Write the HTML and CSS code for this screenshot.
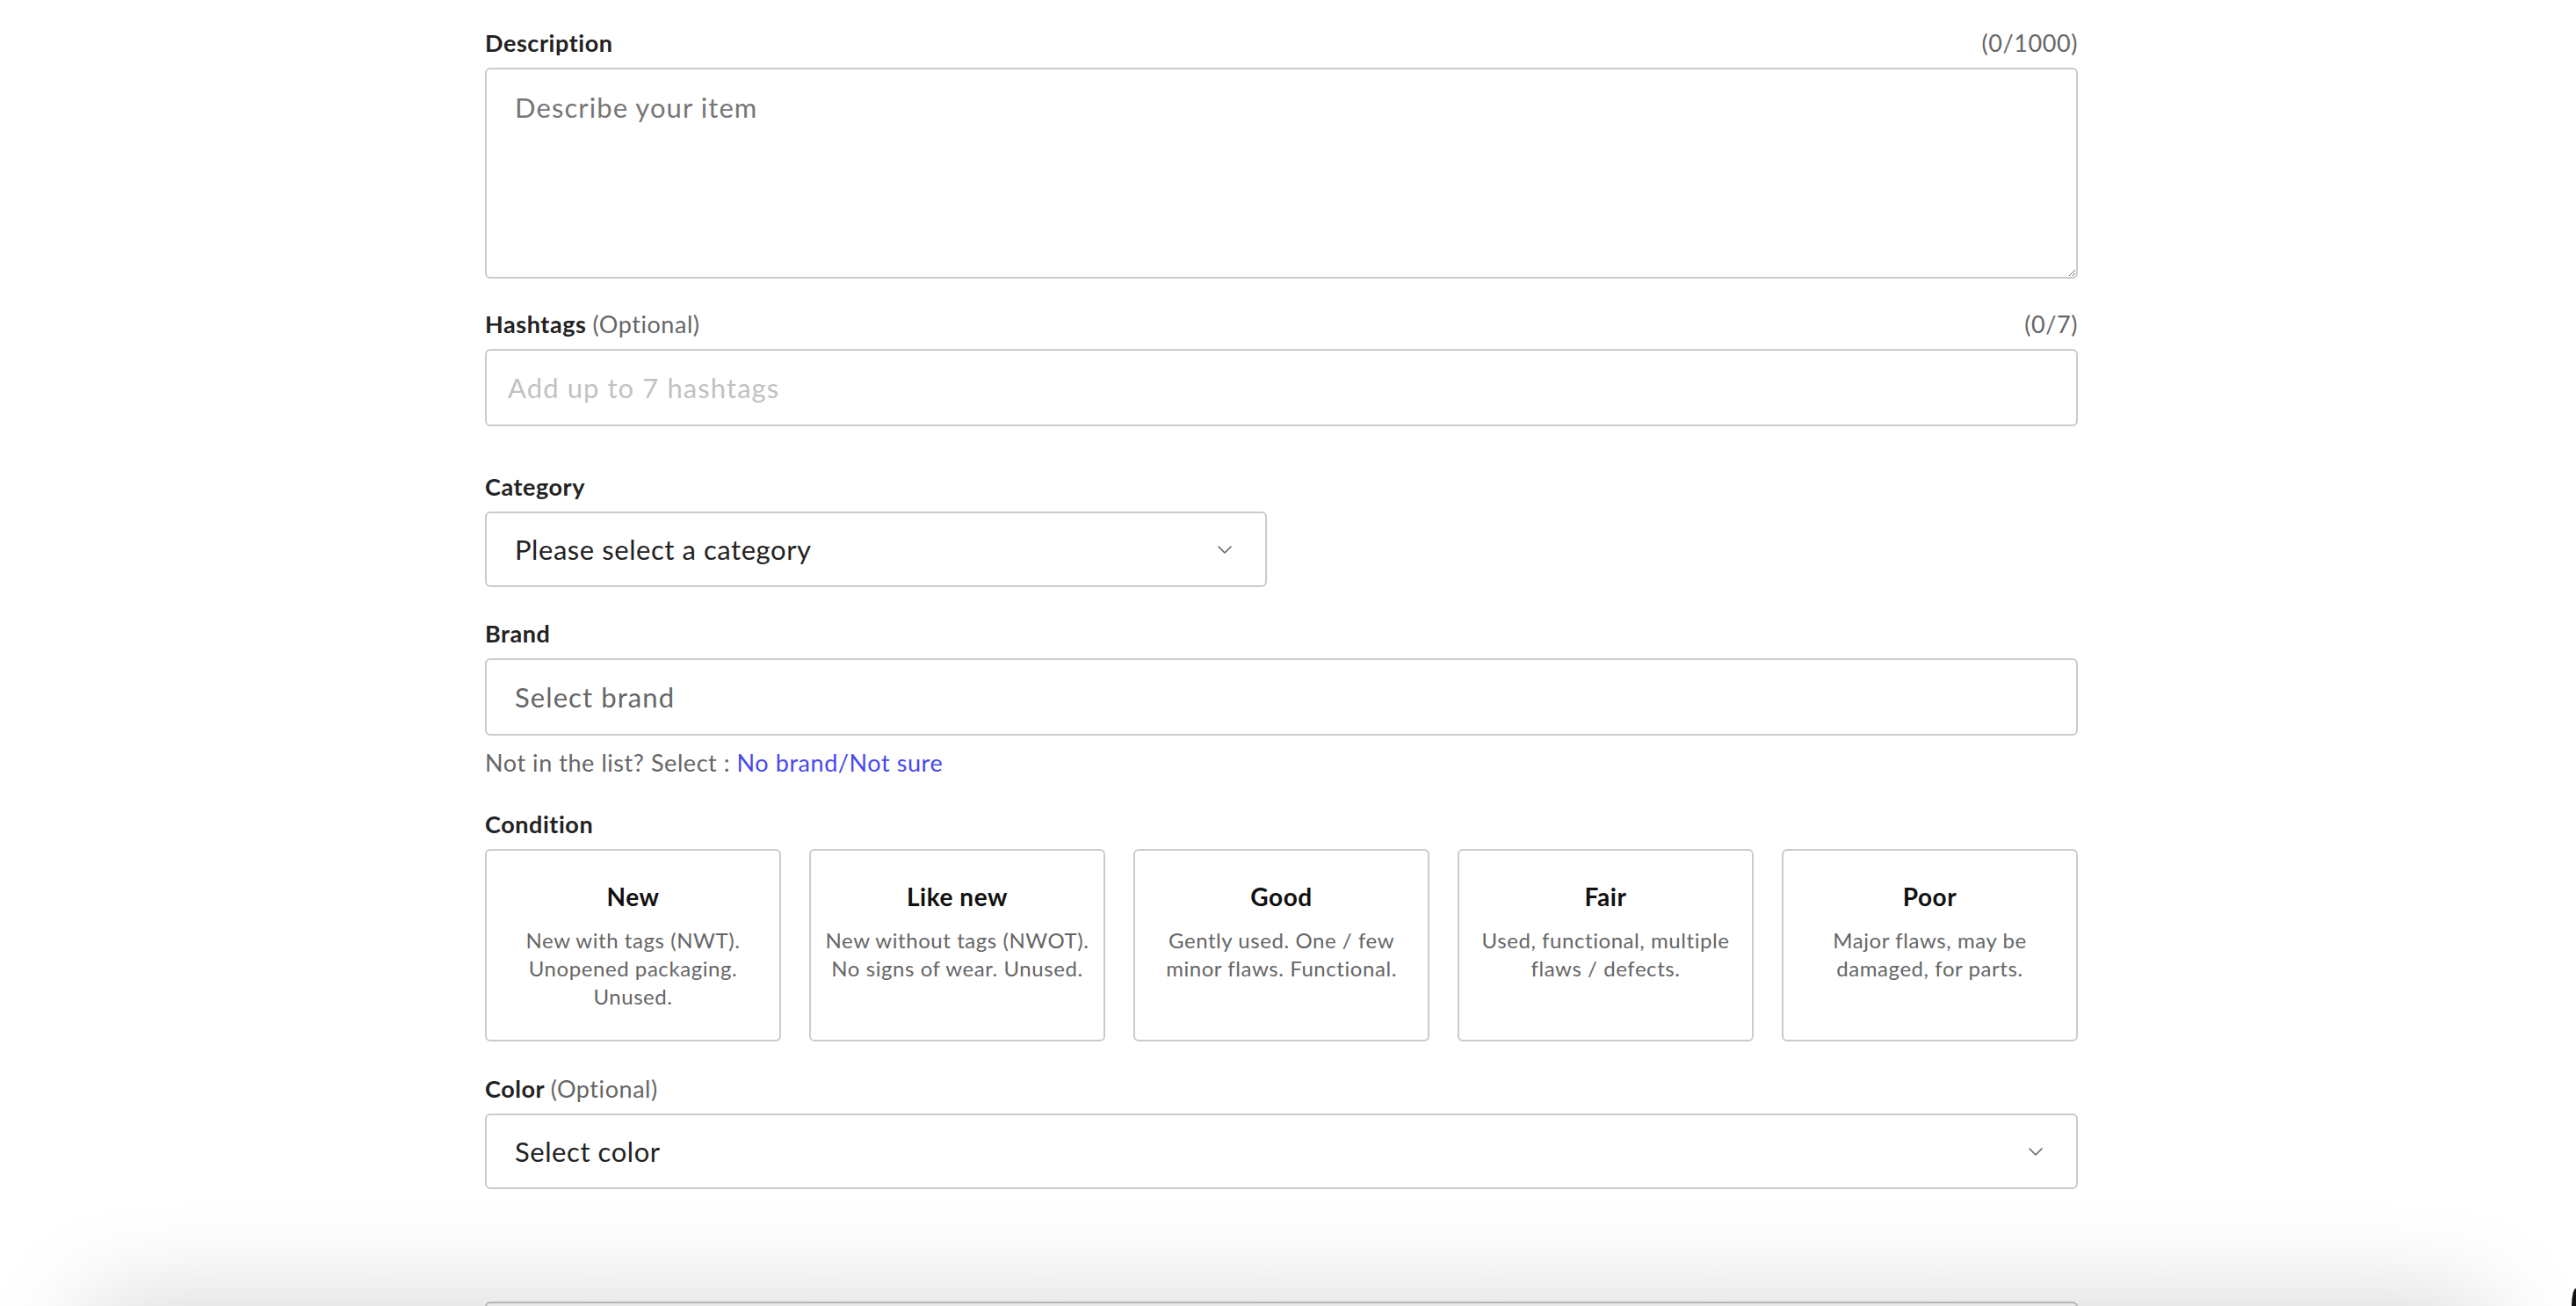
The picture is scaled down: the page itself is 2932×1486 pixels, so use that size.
FILE: index.html
```html
<!DOCTYPE html>
<html lang="en">
<head>
<meta charset="utf-8">
<title>Item details</title>
<link rel="stylesheet" href="styles.css">
</head>
<body>
<main class="page">
  <section class="field field-first">
    <div class="label-row">
      <label class="label" for="desc">Description</label>
      <span class="counter">(0/1000)</span>
    </div>
    <textarea id="desc" class="textarea" placeholder="Describe your item"></textarea>
  </section>

  <section class="field field-hashtags">
    <div class="label-row">
      <label class="label" for="tags">Hashtags <span class="optional">(Optional)</span></label>
      <span class="counter">(0/7)</span>
    </div>
    <input id="tags" class="input input-tags" type="text" placeholder="Add up to 7 hashtags">
  </section>

  <section class="field field-category">
    <div class="label-row">
      <span class="label">Category</span>
    </div>
    <div class="select select-category" role="button">
      <span class="select-value">Please select a category</span>
      <svg class="chevron" width="16" height="9" viewBox="0 0 16 9"><polyline points="1,1 8,8 15,1" fill="none" stroke="#666" stroke-width="1.6" stroke-linecap="round" stroke-linejoin="round"/></svg>
    </div>
  </section>

  <section class="field field-brand">
    <div class="label-row">
      <label class="label" for="brand">Brand</label>
    </div>
    <input id="brand" class="input input-brand" type="text" placeholder="Select brand">
    <p class="helper">Not in the list? Select : <a class="link" href="#">No brand/Not sure</a></p>
  </section>

  <section class="field field-condition">
    <div class="label-row">
      <span class="label">Condition</span>
    </div>
    <div class="cards">
      <div class="card">
        <div class="card-title">New</div>
        <div class="card-desc">New with tags (NWT).<br>Unopened packaging.<br>Unused.</div>
      </div>
      <div class="card">
        <div class="card-title">Like new</div>
        <div class="card-desc">New without tags (NWOT).<br>No signs of wear. Unused.</div>
      </div>
      <div class="card">
        <div class="card-title">Good</div>
        <div class="card-desc">Gently used. One / few<br>minor flaws. Functional.</div>
      </div>
      <div class="card">
        <div class="card-title">Fair</div>
        <div class="card-desc">Used, functional, multiple<br>flaws / defects.</div>
      </div>
      <div class="card">
        <div class="card-title">Poor</div>
        <div class="card-desc">Major flaws, may be<br>damaged, for parts.</div>
      </div>
    </div>
  </section>

  <section class="field field-color">
    <div class="label-row">
      <span class="label">Color <span class="optional">(Optional)</span></span>
    </div>
    <div class="select" role="button">
      <span class="select-value">Select color</span>
      <svg class="chevron" width="16" height="9" viewBox="0 0 16 9"><polyline points="1,1 8,8 15,1" fill="none" stroke="#666" stroke-width="1.6" stroke-linecap="round" stroke-linejoin="round"/></svg>
    </div>
  </section>

  <div class="next-box"></div>
</main>
<div class="footer-bar"></div>
<div class="corner"></div>
</body>
</html>
```

FILE: styles.css
```css
* {
  box-sizing: border-box;
}

html,
body {
  margin: 0;
  height: 100%;
  overflow: hidden;
  background: #fff;
}

body {
  font-family: Lato, "Noto Sans", "Liberation Sans", sans-serif;
  letter-spacing: 0.035em;
  color: #222;
  padding-right: 15px;
}

.page {
  width: 1813px;
  margin: 0 auto;
  padding-top: 31px;
  display: flex;
  flex-direction: column;
}

.field {
  display: flex;
  flex-direction: column;
  margin-top: 34px;
}

.field-first {
  margin-top: 0;
}

.field-hashtags {
  margin-bottom: 17px;
}

.field-brand {
  margin-top: 35px;
}

.field-color {
  margin-top: 36px;
}

.label-row {
  display: flex;
  justify-content: space-between;
  align-items: center;
  height: 36px;
  margin-bottom: 10px;
}

.label {
  font-size: 27px;
  line-height: 36px;
  font-weight: 700;
  color: #222;
}

.optional {
  font-weight: 400;
  color: #666;
}

.counter {
  font-size: 27px;
  line-height: 36px;
  color: #666;
}

.textarea {
  display: block;
  width: 100%;
  height: 240px;
  margin: 0;
  border: 2px solid #cbcbcf;
  border-radius: 6px;
  padding: 22px 32px;
  font-family: Lato, "Noto Sans", "Liberation Sans", sans-serif;
  letter-spacing: 0.035em;
  font-size: 31px;
  line-height: 42px;
  color: #222;
  resize: vertical;
  outline: none;
  background: #fff;
}

.textarea::placeholder {
  color: #767676;
}

.input {
  display: block;
  width: 100%;
  height: 88px;
  margin: 0;
  border: 2px solid #cbcbcf;
  border-radius: 6px;
  padding: 0 32px;
  font-family: Lato, "Noto Sans", "Liberation Sans", sans-serif;
  letter-spacing: 0.035em;
  font-size: 31px;
  color: #222;
  outline: none;
  background: #fff;
}

.input-tags {
  padding-left: 24px;
}

.input-tags::placeholder {
  color: #c2c2c2;
}

.input-brand::placeholder {
  color: #666;
}

.select {
  display: flex;
  align-items: center;
  justify-content: space-between;
  width: 100%;
  height: 86px;
  border: 2px solid #cbcbcf;
  border-radius: 6px;
  padding: 0 38px 0 32px;
  background: #fff;
}

.select-category {
  width: 890px;
}

.select-value {
  font-size: 31px;
  color: #222;
}

.chevron {
  display: block;
  flex: none;
}

.helper {
  margin: 13px 0 0;
  font-size: 27px;
  line-height: 36px;
  color: #666;
}

.link {
  color: #4848ee;
  text-decoration: none;
}

.cards {
  display: grid;
  grid-template-columns: repeat(5, 1fr);
  gap: 32px;
}

.card {
  border: 2px solid #cbcbcf;
  border-radius: 6px;
  padding: 34px 8px 33px;
  text-align: center;
  background: #fff;
}

.card-title {
  font-size: 28px;
  line-height: 36px;
  font-weight: 700;
  color: #111;
}

.card-desc {
  margin-top: 16px;
  font-size: 24px;
  line-height: 32px;
  color: #666;
  white-space: nowrap;
}

.next-box {
  margin-top: 128px;
  height: 88px;
  border: 2px solid #c4c4c8;
  border-radius: 6px;
  flex: none;
}

.footer-bar {
  position: fixed;
  left: 100px;
  right: 100px;
  top: 100%;
  height: 200px;
  background: #fff;
  box-shadow: 0 0 120px rgba(0, 0, 0, 0.18);
}

.corner {
  position: fixed;
  right: 0;
  bottom: 0;
  width: 5px;
  height: 20px;
  background: #111;
  border-top-left-radius: 5px 20px;
}
```
